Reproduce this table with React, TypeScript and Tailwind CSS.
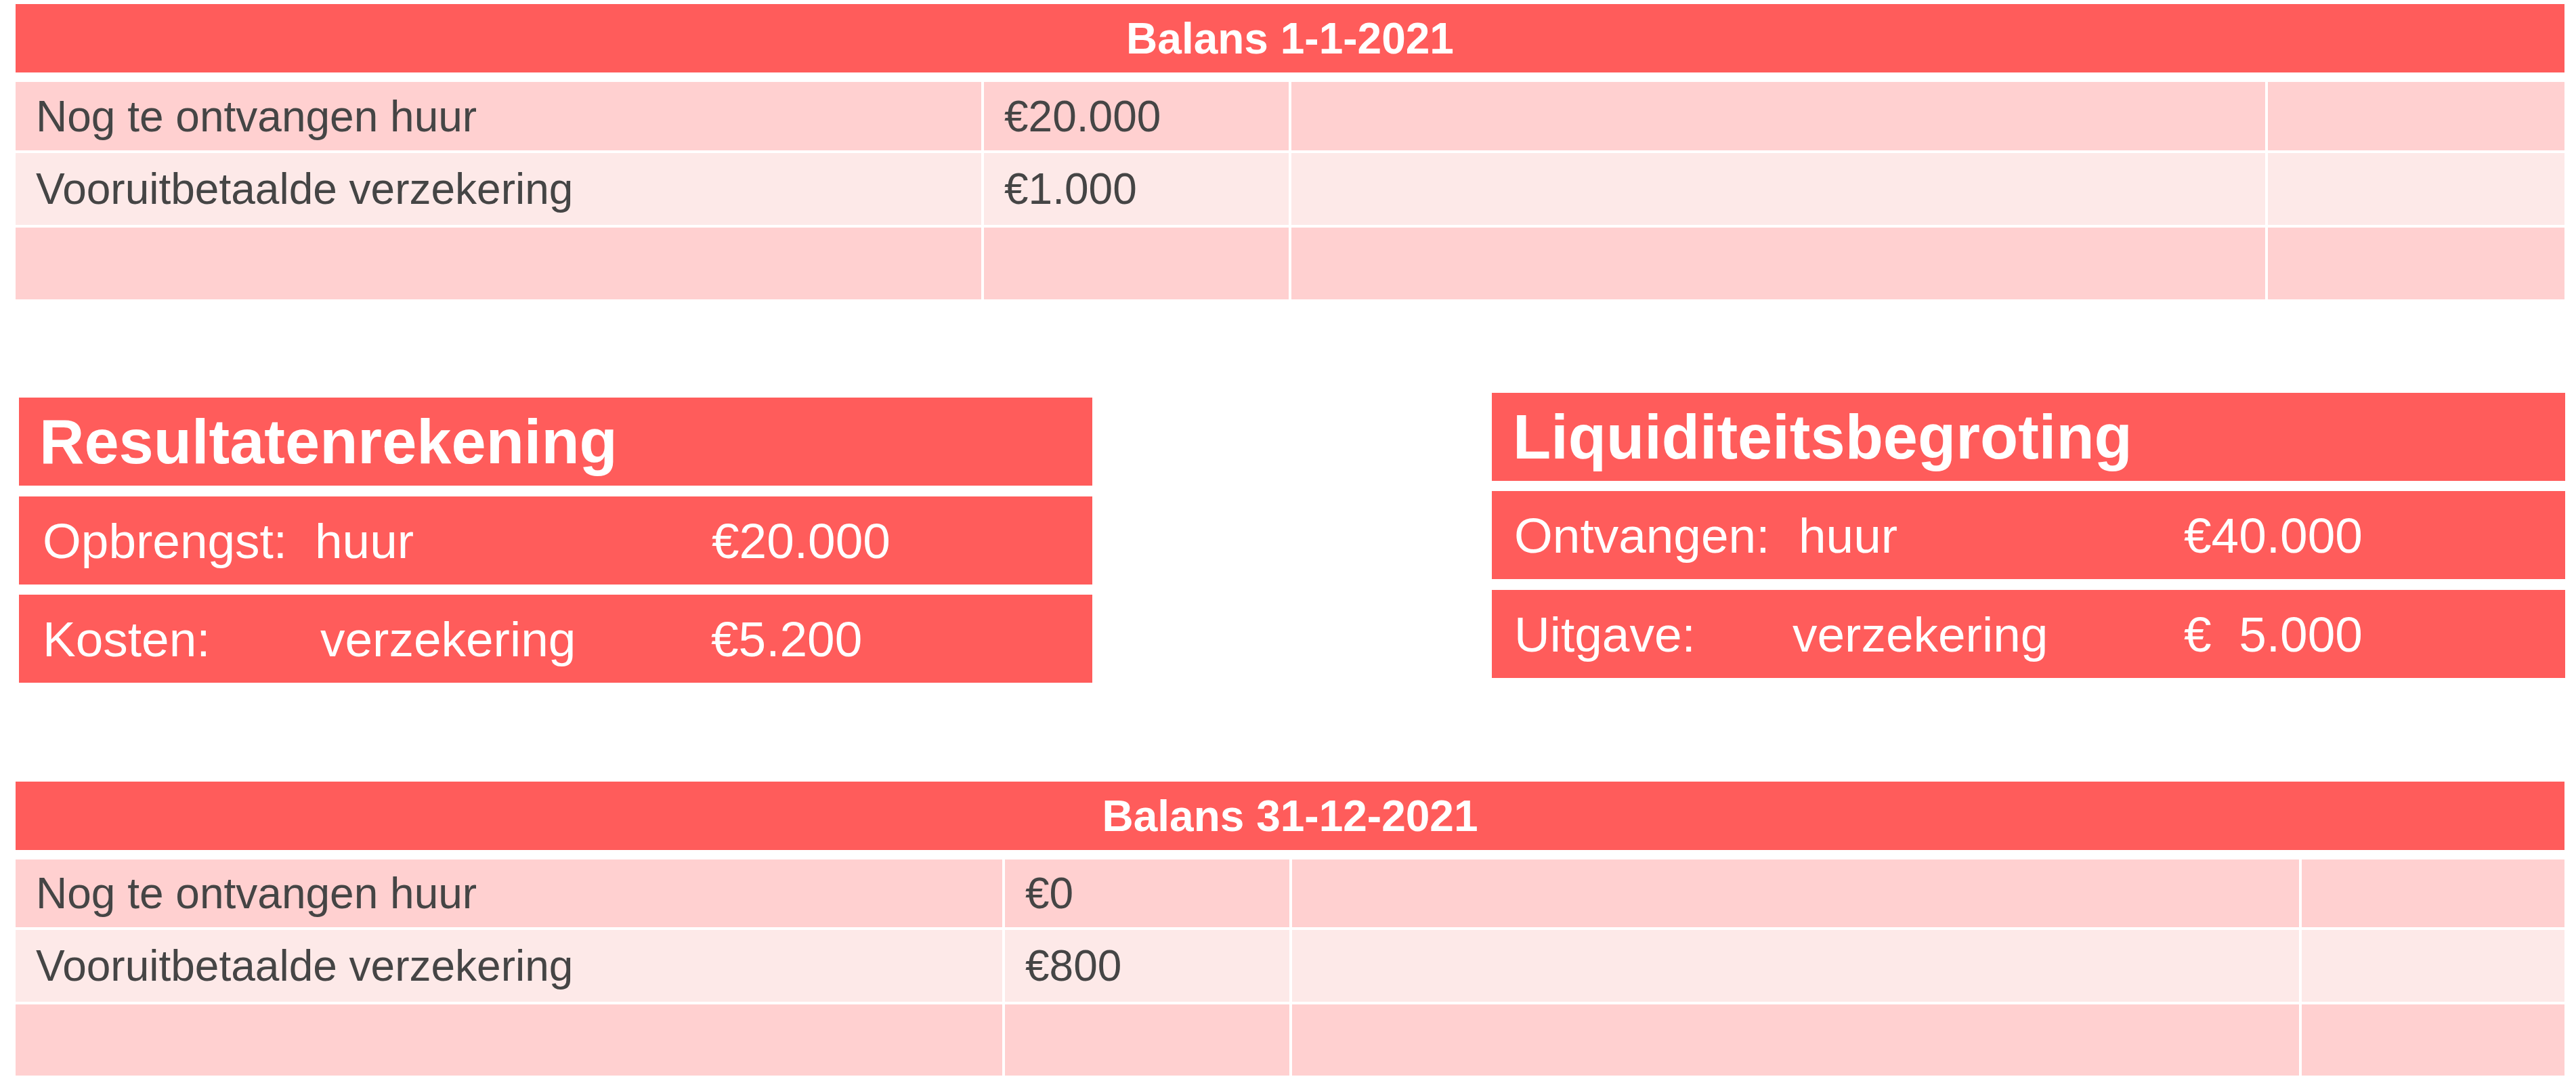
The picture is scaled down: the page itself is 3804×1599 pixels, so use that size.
import React from "react"

type Row = { cells: string[]; height: string; bg: string }

const topRows: Row[] = [
  { cells: ["Nog te ontvangen huur", "€20.000", "", ""], height: "h-[101px]", bg: "bg-[#ffd0d0]" },
  { cells: ["Vooruitbetaalde verzekering", "€1.000", "", ""], height: "h-[106px]", bg: "bg-[#fde9e8]" },
  { cells: ["", "", "", ""], height: "h-[106px]", bg: "bg-[#ffd0d0]" },
]

const bottomRows: Row[] = [
  { cells: ["Nog te ontvangen huur", "€0", "", ""], height: "h-[100px]", bg: "bg-[#ffd0d0]" },
  { cells: ["Vooruitbetaalde verzekering", "€800", "", ""], height: "h-[106px]", bg: "bg-[#fde9e8]" },
  { cells: ["", "", "", ""], height: "h-[105px]", bg: "bg-[#ffd0d0]" },
]

function BalansTable({ title, rows, cols }: { title: string; rows: Row[]; cols: string[] }) {
  return (
    <div className="w-[3764px]">
      <div className="h-[101px] bg-[#ff5c5b] flex items-center justify-center text-white font-bold text-[64px] leading-none">
        {title}
      </div>
      <div className="mt-[14px] flex flex-col gap-[4px]">
        {rows.map((row, i) => (
          <div key={i} className={`flex gap-[4px] ${row.height}`}>
            {row.cells.map((c, j) => (
              <div
                key={j}
                className={`${cols[j]} ${row.bg} flex items-center pl-[30px] text-[64px] leading-none text-[#454545] whitespace-nowrap`}
              >
                {c}
              </div>
            ))}
          </div>
        ))}
      </div>
    </div>
  )
}

type Line = { a: string; b: string; c: string; w1: string; w2: string }

function SummaryBox({ title, lines, gaps, pad, titlePad }: { title: string; lines: Line[]; gaps: string[]; pad: string; titlePad: string }) {
  return (
    <div className="w-[1585px] flex flex-col">
      <div className={`h-[130px] bg-[#ff5c5b] flex items-center ${titlePad} text-white font-bold text-[92px] leading-none`}>
        {title}
      </div>
      {lines.map((l, i) => (
        <div
          key={i}
          className={`${gaps[i]} h-[130px] bg-[#ff5c5b] flex items-center ${pad} text-white text-[73px] leading-none whitespace-pre`}
        >
          <span className={l.w1}>{l.a}</span>
          <span className={l.w2}>{l.b}</span>
          <span>{l.c}</span>
        </div>
      ))}
    </div>
  )
}

export default function App() {
  return (
    <div className="w-[3804px] h-[1599px] bg-white font-['Liberation_Sans',Arial,sans-serif] overflow-hidden">
      <div className="pl-[23px] pt-[6px]">
        <BalansTable
          title="Balans 1-1-2021"
          rows={topRows}
          cols={["w-[1426px]", "w-[450px]", "w-[1438px]", "w-[438px]"]}
        />
      </div>

      <div className="h-[566px] flex items-start">
        <div className="ml-[28px] mt-[145px]">
          <SummaryBox
            title="Resultatenrekening"
            titlePad="pl-[30px]"
            pad="pl-[35px]"
            gaps={["mt-[16px]", "mt-[15px]"]}
            lines={[
              { a: "Opbrengst:", b: "huur", c: "€20.000", w1: "w-[402px]", w2: "w-[586px]" },
              { a: "Kosten:", b: "verzekering", c: "€5.200", w1: "w-[410px]", w2: "w-[577px]" },
            ]}
          />
        </div>
        <div className="ml-[590px] mt-[138px]">
          <SummaryBox
            title="Liquiditeitsbegroting"
            titlePad="pl-[31px]"
            pad="pl-[33px]"
            gaps={["mt-[15px]", "mt-[16px]"]}
            lines={[
              { a: "Ontvangen:", b: "huur", c: "€40.000", w1: "w-[420px]", w2: "w-[569px]" },
              { a: "Uitgave:", b: "verzekering", c: "€  5.000", w1: "w-[411px]", w2: "w-[578px]" },
            ]}
          />
        </div>
      </div>

      <div className="pl-[23px] mt-[146px]">
        <BalansTable
          title="Balans 31-12-2021"
          rows={bottomRows}
          cols={["w-[1457px]", "w-[420px]", "w-[1487px]", "w-[388px]"]}
        />
      </div>
    </div>
  )
}
